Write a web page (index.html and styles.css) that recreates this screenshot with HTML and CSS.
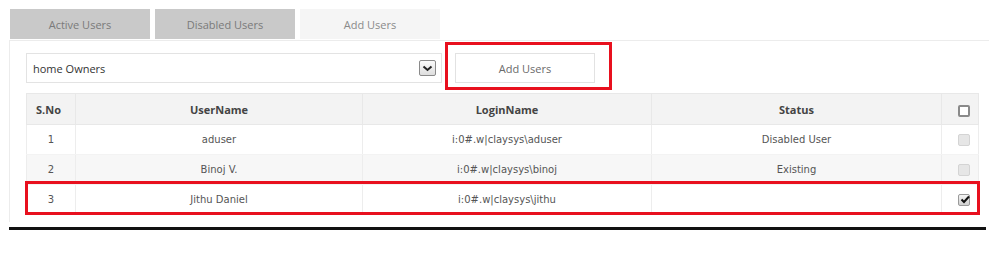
FILE: index.html
```html
<!DOCTYPE html>
<html>
<head>
<meta charset="utf-8">
<link rel="stylesheet" href="styles.css">
</head>
<body>
<div class="page">
  <div class="tabs">
    <div class="tab tab-off">Active Users</div>
    <div class="tab tab-off">Disabled Users</div>
    <div class="tab tab-on">Add Users</div>
  </div>
  <div class="panel">
    <div class="toolbar">
      <div class="select">
        <span class="select-text">home Owners</span>
        <span class="select-arrow">
          <svg width="11" height="7" viewBox="0 0 11 7"><path d="M1.5 1.5 L5.5 5 L9.5 1.5" fill="none" stroke="#222" stroke-width="2"/></svg>
        </span>
      </div>
      <div class="highlight-btn">
        <button class="btn">Add Users</button>
      </div>
    </div>
    <div class="table-wrap">
      <table class="grid">
        <colgroup>
          <col class="c-no"><col class="c-user"><col class="c-login"><col class="c-status"><col class="c-chk">
        </colgroup>
        <thead>
          <tr><th>S.No</th><th>UserName</th><th>LoginName</th><th>Status</th><th><span class="cb cb-head"></span></th></tr>
        </thead>
        <tbody>
          <tr><td>1</td><td>aduser</td><td>i:0#.w|claysys\aduser</td><td>Disabled User</td><td><span class="cb cb-dis"></span></td></tr>
          <tr class="alt"><td>2</td><td>Binoj V.</td><td>i:0#.w|claysys\binoj</td><td>Existing</td><td><span class="cb cb-dis"></span></td></tr>
          <tr><td>3</td><td>Jithu Daniel</td><td>i:0#.w|claysys\jithu</td><td></td><td><span class="cb cb-on"><svg width="10" height="9" viewBox="0 0 10 9"><path d="M1.5 4.5 L4 7 L9 1.5" fill="none" stroke="#111" stroke-width="2"/></svg></span></td></tr>
        </tbody>
      </table>
      <div class="row-mark"></div>
    </div>
  </div>
  <div class="rule"></div>
</div>
</body>
</html>
```

FILE: styles.css
```css
html, body {
  margin: 0;
  padding: 0;
  background: #ffffff;
}
.page {
  width: 989px;
  height: 255px;
  padding-top: 9px;
  box-sizing: border-box;
  font-family: "Open Sans", "Noto Sans", sans-serif;
}
.tabs {
  display: flex;
  gap: 5px;
  margin-left: 10px;
}
.tab {
  width: 140px;
  height: 30px;
  display: flex;
  align-items: center;
  justify-content: center;
  font-size: 11px;
  color: #7a7a7a;
}
.tab-off {
  background: #c9c9c9;
}
.tab-on {
  background: #f5f5f5;
  color: #8a8a8a;
}
.panel {
  margin-top: 1px;
  margin-left: 9px;
  border-top: 1px solid #ececec;
  border-left: 1px solid #ececec;
  height: 182px;
  box-sizing: border-box;
  padding: 1px 0 0 16px;
}
.toolbar {
  display: flex;
  align-items: flex-start;
  gap: 3px;
}
.select {
  margin-top: 11px;
  width: 416px;
  height: 30px;
  box-sizing: border-box;
  border: 1px solid #e3e3e3;
  display: flex;
  align-items: center;
  justify-content: space-between;
  padding: 0 5px 0 6px;
}
.select-text {
  font-size: 11px;
  color: #333;
}
.select-arrow {
  width: 17px;
  height: 16px;
  box-sizing: border-box;
  border: 1px solid #8a8a8a;
  border-radius: 2px;
  background: linear-gradient(#fafafa, #dedede);
  display: flex;
  align-items: center;
  justify-content: center;
}
.highlight-btn {
  border: 3px solid #e8101e;
  padding: 8px 14px 4px 7px;
}
.btn {
  width: 140px;
  height: 30px;
  background: #ffffff;
  border: 1px solid #e2e2e2;
  font-family: "Open Sans", "Noto Sans", sans-serif;
  font-size: 11px;
  color: #6a6a6a;
  padding: 0;
}
.table-wrap {
  position: relative;
  margin-top: 3px;
  width: 952px;
}
.grid {
  width: 952px;
  border-collapse: collapse;
  table-layout: fixed;
  border: 1px solid #e8e8e8;
}
.c-no { width: 49px; }
.c-user { width: 287px; }
.c-login { width: 289px; }
.c-status { width: 290px; }
.c-chk { width: 37px; }
.grid th {
  height: 30px;
  padding: 0;
  background: #f3f3f3;
  border: 1px solid #e8e8e8;
  font-size: 11px;
  font-weight: 700;
  color: #444;
  text-align: center;
}
.grid th:first-child {
  text-align: left;
  padding-left: 9px;
}
.grid td {
  height: 29px;
  padding: 0;
  border-left: 1px solid #ededed;
  border-right: 1px solid #ededed;
  border-bottom: 1px solid #f3f3f3;
  font-family: "DejaVu Sans", Verdana, sans-serif;
  font-size: 10px;
  color: #555;
  text-align: center;
}
.grid tr.alt td {
  background: #f7f7f7;
}
.grid td:last-child, .grid th:last-child {
  text-align: left;
  padding-left: 16px;
}
.cb {
  display: inline-block;
  width: 12px;
  height: 12px;
  box-sizing: border-box;
  vertical-align: middle;
  border-radius: 2px;
}
.cb-head {
  border: 2px solid #8a8a8a;
  background: #fff;
}
.cb-dis {
  border: 1px solid #d4d4d4;
  background: #e6e6e6;
}
.cb-on {
  border: 1px solid #9a9a9a;
  background: linear-gradient(#f4f4f4, #d0d0d0);
  position: relative;
}
.cb-on svg {
  position: absolute;
  left: 1px;
  top: 0;
}
.row-mark {
  position: absolute;
  left: -1px;
  top: 88px;
  width: 955px;
  height: 34px;
  box-sizing: border-box;
  border: 3px solid #e8101e;
}
.rule {
  margin: 5px 0 0 9px;
  width: 977px;
  height: 3px;
  background: #111;
}
```
